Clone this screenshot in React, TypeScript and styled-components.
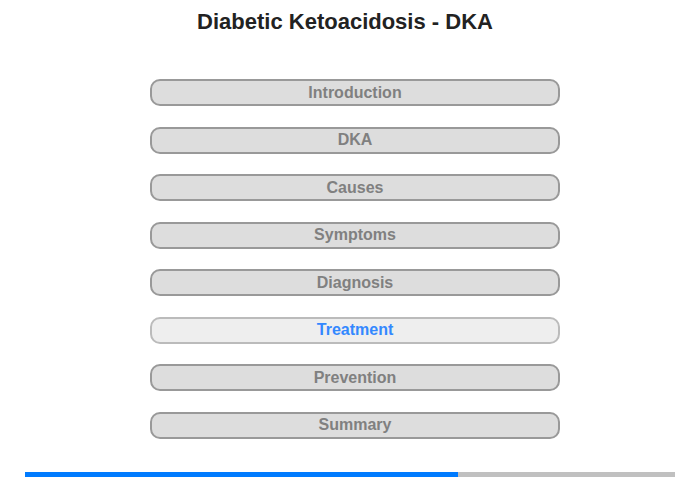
import React from 'react'
import styled, { createGlobalStyle } from 'styled-components'

const sections = ['Introduction', 'DKA', 'Causes', 'Symptoms', 'Diagnosis', 'Treatment', 'Prevention', 'Summary']
const active = 'Treatment'

const GlobalStyle = createGlobalStyle`
  html, body {
    margin: 0;
    padding: 0;
    background: #fff;
    font-family: "Liberation Sans", Arial, sans-serif;
  }
`

const Page = styled.div`
  width: 700px;
  height: 480px;
  display: flex;
  flex-direction: column;
  box-sizing: border-box;
`

const Title = styled.h1`
  margin: 9px 0 0 0;
  padding-right: 10px;
  font-size: 22px;
  line-height: 25px;
  font-weight: bold;
  color: #222;
  text-align: center;
`

const Menu = styled.nav`
  display: flex;
  flex-direction: column;
  gap: 20.5px;
  margin: 45px 0 0 150px;
  width: 410px;
`

const MenuButton = styled.div<{ $active?: boolean }>`
  box-sizing: border-box;
  height: 27px;
  border: 2px solid ${(p) => (p.$active ? '#bbb' : '#999')};
  border-radius: 10px;
  background: ${(p) => (p.$active ? '#eee' : '#ddd')};
  color: ${(p) => (p.$active ? '#3388ff' : '#808080')};
  font-size: 16px;
  font-weight: bold;
  display: flex;
  align-items: center;
  justify-content: center;
`

const Progress = styled.div`
  margin: auto 25px 3px 25px;
  height: 5px;
  background: #c0c0c0;
`

const ProgressFill = styled.div`
  height: 100%;
  background: #007bff;
`

export default function App() {
  const idx = sections.indexOf(active)
  const pct = ((idx + 1) / (sections.length + 1)) * 100
  return (
    <Page>
      <GlobalStyle />
      <Title>Diabetic Ketoacidosis - DKA</Title>
      <Menu>
        {sections.map((s) => (
          <MenuButton key={s} $active={s === active}>
            {s}
          </MenuButton>
        ))}
      </Menu>
      <Progress>
        <ProgressFill style={{ width: `${pct}%` }} />
      </Progress>
    </Page>
  )
}
